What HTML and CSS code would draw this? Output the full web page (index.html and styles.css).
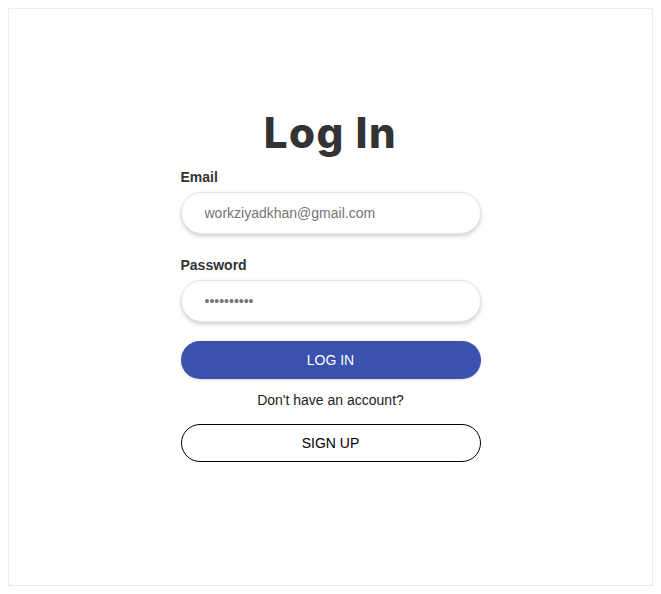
FILE: index.html
```html
<!DOCTYPE html>
<html lang="en">
<head>
    <meta charset="UTF-8">
    <meta name="viewport" content="width=device-width, initial-scale=1.0">
    <title>Log In</title>
    <link rel="stylesheet" href="styles.css">
</head>
<body>

    <div class="card">
        <form class="login-form" onsubmit="return false;">
            <h1 class="title">Log In</h1>

            <label class="field-label" for="email">Email</label>
            <input class="field" type="email" id="email" value="workziyadkhan@gmail.com">

            <label class="field-label field-label-gap" for="password">Password</label>
            <input class="field" type="password" id="password" value="abcdefghij">

            <button class="btn btn-primary" type="submit">LOG IN</button>
            <p class="hint">Don't have an account?</p>
            <button class="btn btn-outline" type="button">SIGN UP</button>
        </form>
    </div>

</body>
</html>
```

FILE: styles.css
```css
body {
    margin: 8px;
    font-family: 'Liberation Sans', Arial, sans-serif;
    background: #ffffff;
}

.card {
    height: 578px;
    box-sizing: border-box;
    background: #ffffff;
    border: 1px solid #ebebeb;
    border-radius: 3px;
    box-shadow: 0 1px 4px rgba(0, 0, 0, 0.2);
    display: flex;
    justify-content: center;
    padding-top: 98px;
}

.login-form {
    width: 300px;
    display: flex;
    flex-direction: column;
}

.title {
    font-family: 'Inter', sans-serif;
    font-weight: 800;
    font-size: 42px;
    letter-spacing: 1.5px;
    line-height: 52px;
    color: #333333;
    text-align: center;
    margin: 0 0 10px;
}

.field-label {
    font-size: 14px;
    font-weight: bold;
    color: #333333;
    line-height: 16px;
    margin-bottom: 7px;
}

.field-label-gap {
    margin-top: 23px;
}

.field {
    height: 42px;
    box-sizing: border-box;
    border: 1px solid #e6e6e6;
    border-radius: 21px;
    padding: 0 23px;
    font-family: inherit;
    font-size: 14px;
    color: #757575;
    box-shadow: 0 2px 4px rgba(0, 0, 0, 0.2);
    outline: none;
}

.btn {
    height: 38px;
    border-radius: 19px;
    font-family: inherit;
    font-size: 14px;
    cursor: pointer;
}

.btn-primary {
    margin-top: 19px;
    background: #3a51ae;
    color: #ffffff;
    border: none;
    box-shadow: 0 1px 3px rgba(0, 0, 0, 0.15);
}

.hint {
    margin: 13px 0 16px;
    font-size: 14px;
    line-height: 16px;
    text-align: center;
    color: #222222;
}

.btn-outline {
    background: #ffffff;
    color: #000000;
    border: 1px solid #000000;
}
```
